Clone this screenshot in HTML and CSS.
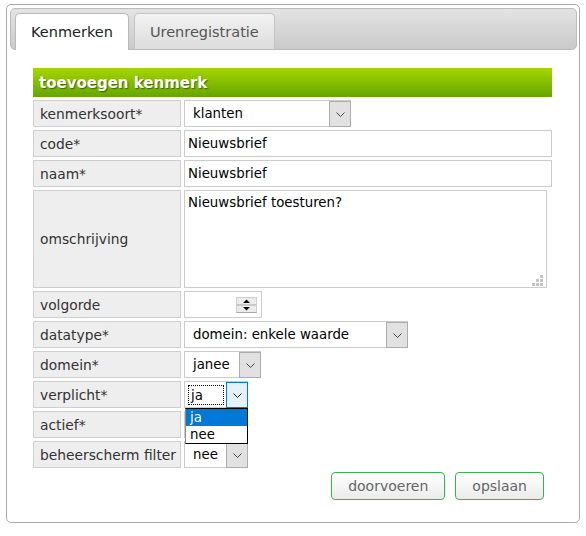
FILE: index.html
```
<!DOCTYPE html>
<html lang="nl">
<head>
<meta charset="utf-8">
<title>Kenmerken</title>
<link rel="stylesheet" href="styles.css">
</head>
<body>
<div class="panel">
  <div class="tabbar">
    <div class="tab active">Kenmerken</div>
    <div class="tab">Urenregistratie</div>
  </div>
  <div class="content">
    <div class="form">
      <div class="form-title">toevoegen kenmerk</div>
      <div class="grid">
        <div class="label">kenmerksoort*</div>
        <div class="value">
          <div class="select w-soort"><span class="sel-text">klanten</span><span class="sel-btn"><svg width="9" height="5" viewBox="0 0 9 5"><path d="M0.5 0.5 L4.5 4.5 L8.5 0.5" fill="none" stroke="#444" stroke-width="1"/></svg></span></div>
        </div>

        <div class="label">code*</div>
        <div class="value"><input class="text-input" type="text" value="Nieuwsbrief"></div>

        <div class="label">naam*</div>
        <div class="value"><input class="text-input" type="text" value="Nieuwsbrief"></div>

        <div class="label">omschrijving</div>
        <div class="value">
          <div class="ta-wrap">
            <textarea class="textarea">Nieuwsbrief toesturen?</textarea>
            <svg class="grip" width="11" height="11" viewBox="0 0 11 11"><g fill="#c6c6c6"><rect x="8" y="0" width="3" height="3"/><rect x="4" y="4" width="3" height="3"/><rect x="8" y="4" width="3" height="3"/><rect x="0" y="8" width="3" height="3"/><rect x="4" y="8" width="3" height="3"/><rect x="8" y="8" width="3" height="3"/></g></svg>
          </div>
        </div>

        <div class="label">volgorde</div>
        <div class="value">
          <div class="num-input"><svg width="21" height="16" viewBox="0 0 21 16"><rect x="0.5" y="0.5" width="20" height="15" fill="#ececec" stroke="#cfcfcf"/><rect x="0.5" y="7" width="20" height="2" fill="#c9c9c9"/><rect x="0.5" y="15" width="20" height="1" fill="#a8a8a8"/><path d="M7 6 L10.5 2.5 L14 6 Z" fill="#000"/><path d="M7 10 L10.5 13.5 L14 10 Z" fill="#000"/></svg></div>
        </div>

        <div class="label">datatype*</div>
        <div class="value">
          <div class="select w-type"><span class="sel-text">domein: enkele waarde</span><span class="sel-btn"><svg width="9" height="5" viewBox="0 0 9 5"><path d="M0.5 0.5 L4.5 4.5 L8.5 0.5" fill="none" stroke="#444" stroke-width="1"/></svg></span></div>
        </div>

        <div class="label">domein*</div>
        <div class="value">
          <div class="select w-domein"><span class="sel-text">janee</span><span class="sel-btn"><svg width="9" height="5" viewBox="0 0 9 5"><path d="M0.5 0.5 L4.5 4.5 L8.5 0.5" fill="none" stroke="#444" stroke-width="1"/></svg></span></div>
        </div>

        <div class="label">verplicht*</div>
        <div class="value">
          <div class="select w-small focus"><span class="sel-text focused">ja</span><span class="sel-btn"><svg width="9" height="5" viewBox="0 0 9 5"><path d="M0.5 0.5 L4.5 4.5 L8.5 0.5" fill="none" stroke="#222" stroke-width="1"/></svg></span>
            <ul class="dropdown">
              <li class="opt selected">ja</li>
              <li class="opt">nee</li>
            </ul>
          </div>
        </div>

        <div class="label">actief*</div>
        <div class="value">
          <div class="select w-small"><span class="sel-text"></span><span class="sel-btn"><svg width="9" height="5" viewBox="0 0 9 5"><path d="M0.5 0.5 L4.5 4.5 L8.5 0.5" fill="none" stroke="#444" stroke-width="1"/></svg></span></div>
        </div>

        <div class="label">beheerscherm filter</div>
        <div class="value">
          <div class="select w-small"><span class="sel-text">nee</span><span class="sel-btn"><svg width="9" height="5" viewBox="0 0 9 5"><path d="M0.5 0.5 L4.5 4.5 L8.5 0.5" fill="none" stroke="#444" stroke-width="1"/></svg></span></div>
        </div>
      </div>
      <div class="actions">
        <button class="btn" type="button">doorvoeren</button>
        <button class="btn" type="button">opslaan</button>
      </div>
    </div>
  </div>
</div>
</body>
</html>
```
FILE: styles.css
```
* { box-sizing: border-box; }

body {
  margin: 0;
  background: #fff;
  font-family: "DejaVu Sans", Verdana, sans-serif;
  color: #333;
}

.panel {
  margin: 4px 0 0 6px;
  width: 574px;
  border: 1px solid #aaa;
  border-radius: 5px;
  padding: 3px 2px 22px 3px;
}

.tabbar {
  display: flex;
  align-items: flex-end;
  gap: 5px;
  height: 42px;
  border: 1px solid #bbb;
  border-radius: 5px;
  background: linear-gradient(#e3e3e3, #cacaca);
  padding: 0 4px;
}

.tab {
  height: 36px;
  padding: 0 15px;
  display: flex;
  align-items: center;
  border: 1px solid #c4c4c4;
  border-bottom: none;
  border-radius: 5px 5px 0 0;
  font-size: 14.5px;
  color: #555;
  background: linear-gradient(#f3f3f3, #dcdcdc);
}

.tab.active {
  height: 37px;
  margin-bottom: -1px;
  background: #fff;
  color: #222;
  border-color: #b8b8b8;
}

.content {
  padding: 18px 0 0 23px;
}

.form {
  width: 519px;
}

.form-title {
  height: 29px;
  margin-bottom: 3px;
  padding-left: 6px;
  display: flex;
  align-items: center;
  background: linear-gradient(#a6d600, #64a500);
  color: #fff;
  font-weight: bold;
  font-size: 15px;
  text-shadow: 1px 1px 1px rgba(0, 0, 0, 0.45);
}

.grid {
  display: grid;
  grid-template-columns: 148px 1fr;
  gap: 3px;
}

.label {
  min-height: 27px;
  background: #eee;
  border: 1px solid #cfcfcf;
  padding-left: 6px;
  display: flex;
  align-items: center;
  font-size: 13.8px;
  color: #333;
  white-space: nowrap;
}

.value {
  display: flex;
  align-items: flex-start;
  font-size: 13.33px;
  color: #000;
}

.text-input {
  width: 100%;
  height: 27px;
  margin: 0;
  border: 1px solid #ccc;
  padding: 0 3px;
  font-family: "DejaVu Sans", Verdana, sans-serif;
  font-size: 13.33px;
  color: #000;
  background: #fff;
  outline: none;
}

.ta-wrap {
  position: relative;
  display: flex;
}

.textarea {
  width: 363px;
  height: 98px;
  margin: 0;
  border: 1px solid #ccc;
  padding: 4px 3px;
  font-family: "DejaVu Sans", Verdana, sans-serif;
  font-size: 13.33px;
  color: #000;
  resize: none;
  outline: none;
}

.grip {
  position: absolute;
  right: 4px;
  bottom: 2px;
}

.num-input {
  width: 78px;
  height: 27px;
  border: 1px solid #ccc;
  padding-right: 4px;
  display: flex;
  align-items: center;
  justify-content: flex-end;
  background: #fff;
}

.select {
  position: relative;
  display: flex;
  height: 27px;
  border: 1px solid #ccc;
  background: #fff;
}

.w-soort { width: 167px; }
.w-type { width: 224px; }
.w-domein { width: 77px; }
.w-small { width: 64px; }

.sel-text {
  flex: 1;
  display: flex;
  align-items: center;
  padding-left: 8px;
  white-space: nowrap;
  overflow: hidden;
}

.sel-text.focused {
  margin: 3px 2px 2px 3px;
  padding-left: 2px;
  border: 1px dotted #000;
}

.sel-btn {
  width: 22px;
  flex: none;
  margin: 0 -1px -1px 0;
  border: 1px solid #adadad;
  background: #e1e1e1;
  display: flex;
  align-items: center;
  justify-content: center;
}

.select.focus .sel-btn {
  background: #e5f1fb;
  border-color: #0078d7;
}

.dropdown {
  position: absolute;
  left: 0;
  top: 26px;
  width: 63px;
  margin: 0;
  padding: 0;
  list-style: none;
  border: 1px solid #000;
  border-left-color: #8a8a8a;
  background: #fff;
  z-index: 2;
}

.opt {
  height: 17px;
  line-height: 17px;
  padding-left: 4px;
  font-size: 13.33px;
  color: #000;
}

.opt.selected {
  background: #0078d7;
  color: #fff;
}

.actions {
  display: flex;
  justify-content: flex-end;
  gap: 10px;
  margin-top: 4px;
  padding-right: 8px;
}

.btn {
  height: 28px;
  margin: 0;
  padding: 0 16px;
  border: 1px solid #35b449;
  border-radius: 4px;
  background: linear-gradient(#ffffff, #ebebeb);
  color: #666;
  font-family: "DejaVu Sans", Verdana, sans-serif;
  font-size: 14px;
}
```
